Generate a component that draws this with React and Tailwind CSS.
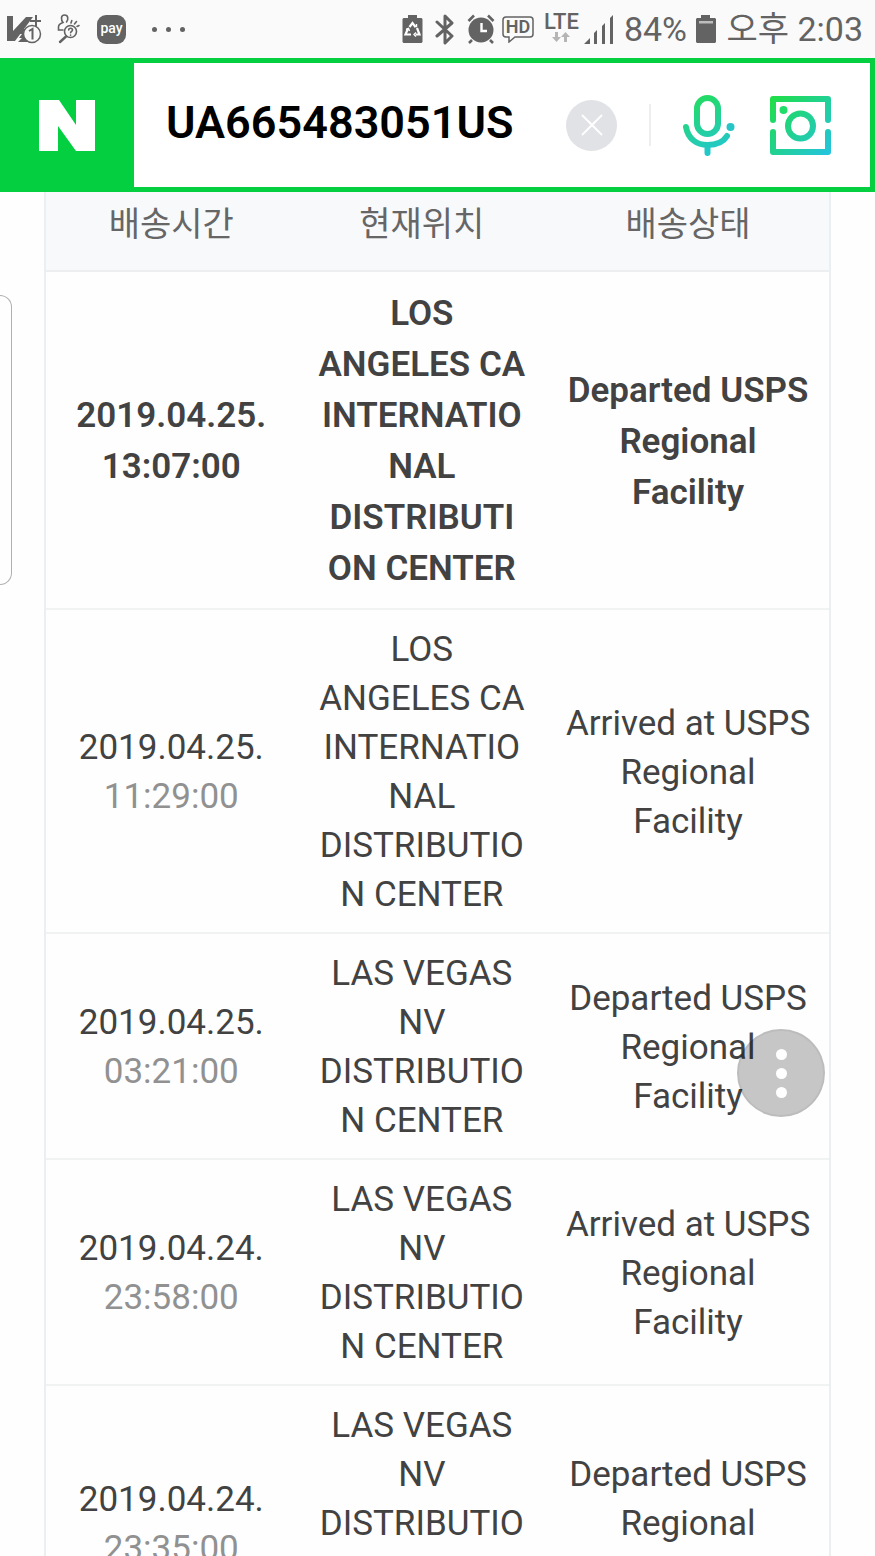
import { useState } from 'react';

const shipments = [
  {
    date: '2019.04.25.',
    time: '13:07:00',
    location: ['LOS', 'ANGELES CA', 'INTERNATIO', 'NAL', 'DISTRIBUTI', 'ON CENTER'],
    status: ['Departed USPS', 'Regional', 'Facility'],
    latest: true,
  },
  {
    date: '2019.04.25.',
    time: '11:29:00',
    location: ['LOS', 'ANGELES CA', 'INTERNATIO', 'NAL', 'DISTRIBUTIO', 'N CENTER'],
    status: ['Arrived at USPS', 'Regional', 'Facility'],
  },
  {
    date: '2019.04.25.',
    time: '03:21:00',
    location: ['LAS VEGAS', 'NV', 'DISTRIBUTIO', 'N CENTER'],
    status: ['Departed USPS', 'Regional', 'Facility'],
  },
  {
    date: '2019.04.24.',
    time: '23:58:00',
    location: ['LAS VEGAS', 'NV', 'DISTRIBUTIO', 'N CENTER'],
    status: ['Arrived at USPS', 'Regional', 'Facility'],
  },
  {
    date: '2019.04.24.',
    time: '23:35:00',
    location: ['LAS VEGAS', 'NV', 'DISTRIBUTIO', 'N CENTER', '\u00a0'],
    status: ['Departed USPS', 'Regional', 'Facility'],
  },
];

const VaccineIcon = () => (
  <svg width="36" height="30" viewBox="0 0 36 30">
    <path d="M0 2h6v15L19 3h7L8 27H0z" fill="#636363" />
    <path d="M14 15h8v13H11l4-4h-3l3-4h-3z" fill="#636363" />
    <path d="M29 1v12M23 7h11" stroke="#636363" strokeWidth="2" />
    <circle cx="25" cy="20" r="8.5" fill="#fafafa" stroke="#636363" strokeWidth="1.5" />
    <path d="M22 17l3.500-2v10.500" fill="none" stroke="#636363" strokeWidth="2" />
  </svg>
);

const FindUserIcon = () => (
  <svg width="24" height="30" viewBox="0 0 24 30" fill="none" stroke="#636363" strokeWidth="1.600" strokeLinecap="round">
    <path d="M6 16H1.500v-3c0-3 2-3.500 4.500-4.500C4 6 3.500 1 7.500 1S11.500 5.500 9.500 8" />
    <circle cx="13.500" cy="17.500" r="6" />
    <path d="M9 22.500L3 28" strokeWidth="2.400" />
    <path d="M11.700 16c0-2.500 3.800-2.300 3.800 0 0 1.300-1.900 1.300-1.900 2.800M13.600 21v.2" />
    <path d="M14 9l.8-2.500M17.500 10l2-2.500M20 12.500l2-1" />
  </svg>
);

const RecycleBatteryIcon = () => (
  <svg width="21" height="30" viewBox="0 0 21 30">
    <path d="M6 1h9v3h4.500l1 1v23l-1 1h-18l-1-1V5l1-1H6z" fill="#636363" />
    <g fill="none" stroke="#fff" strokeWidth="2.200">
      <path d="M7.500 13l3-4 3 4M15 14l2.500 6.500h-4M9 20.500H3.500L6 14.500" />
      <path d="M12 12.500h2.500V10M14 18.500l-2 2 2 2M4 15.500l2.500-1 1 2.500" strokeWidth="1.400" />
    </g>
  </svg>
);

const BluetoothIcon = () => (
  <svg width="20" height="31" viewBox="0 0 20 31">
    <path d="M2 8l15 14-7 7V2l7 7L2 22" fill="none" stroke="#636363" strokeWidth="3" strokeLinejoin="round" strokeLinecap="round" />
  </svg>
);

const AlarmIcon = () => (
  <svg width="28" height="30" viewBox="0 0 28 30">
    <circle cx="14" cy="16" r="12.500" fill="#636363" />
    <path d="M1.500 7L7 1.500M26.500 7L21 1.500M5 26l-3 3M23 26l3 3" stroke="#636363" strokeWidth="2.600" />
    <path d="M14.500 9v8H20" fill="none" stroke="#fff" strokeWidth="2.400" />
  </svg>
);

const HdIcon = () => (
  <svg width="32" height="27" viewBox="0 0 32 27">
    <path
      d="M4 1h24q3 0 3 3v14q0 3-3 3H13l-6 5v-5H4q-3 0-3-3V4q0-3 3-3z"
      fill="none"
      stroke="#636363"
      strokeWidth="1.500"
    />
    <text x="16" y="17" textAnchor="middle" fontFamily="Roboto, sans-serif" fontWeight="600" fontSize="18" fill="#636363">
      HD
    </text>
  </svg>
);

const SignalIcon = () => (
  <svg width="30" height="29" viewBox="0 0 30 29" fill="#636363">
    <path d="M0 29l6-6v6zM10 18l3-3v14h-3zM18 11l3-3v21h-3zM26 3l3-3v29h-3z" />
  </svg>
);

const BatteryIcon = () => (
  <svg width="20" height="30" viewBox="0 0 20 30">
    <path d="M5 1h9v3h5l1 1v23l-1 1H1l-1-1V5l1-1h4z" fill="#636363" />
    <path d="M3 7h14v2.500H3z" fill="#bdbdbd" />
  </svg>
);

const MicIcon = () => (
  <svg width="52" height="63" viewBox="0 0 52 63" fill="none" strokeWidth="6" strokeLinecap="round">
    <defs>
      <linearGradient id="mic" x1="10" y1="0" x2="36" y2="63" gradientUnits="userSpaceOnUse">
        <stop offset="0" stopColor="#23dd5a" />
        <stop offset="1" stopColor="#23c5d8" />
      </linearGradient>
    </defs>
    <rect x="14" y="4" width="21" height="36" rx="10.500" stroke="url(#mic)" />
    <path d="M3 33c2 12 11 18 21.500 18S41 47 44 42M24.500 51v8" stroke="url(#mic)" />
    <circle cx="47.500" cy="33" r="4" fill="#27c4c8" />
  </svg>
);

const CameraIcon = () => (
  <svg width="61" height="59" viewBox="0 0 61 59" fill="none" strokeWidth="6" strokeLinecap="round" strokeLinejoin="round">
    <defs>
      <linearGradient id="cam" x1="0" y1="0" x2="61" y2="59" gradientUnits="userSpaceOnUse">
        <stop offset="0" stopColor="#1fdf43" />
        <stop offset="1" stopColor="#24c3e2" />
      </linearGradient>
    </defs>
    <path d="M3 24V3h55v21M3 36v20h55V36" stroke="url(#cam)" />
    <circle cx="30.500" cy="30" r="12.500" stroke="url(#cam)" />
    <circle cx="13.500" cy="14" r="4" fill="#22dc68" />
  </svg>
);

const StatusBar = () => (
  <div className="flex h-[58px] shrink-0 items-center justify-between bg-[#fafafa] pl-[7px] pr-3 text-[#636363]">
    <div className="flex items-center">
      <VaccineIcon />
      <div className="ml-[14px]">
        <FindUserIcon />
      </div>
      <span className="ml-4 flex h-[29px] w-[29px] items-center justify-center rounded-[9px] bg-[#636363] pb-[2px] text-[14px] font-medium text-white">
        pay
      </span>
      <div className="ml-[26px] flex gap-[9px]">
        <i className="h-[5px] w-[5px] rounded-full bg-[#636363]" />
        <i className="h-[5px] w-[5px] rounded-full bg-[#636363]" />
        <i className="h-[5px] w-[5px] rounded-full bg-[#636363]" />
      </div>
    </div>
    <div className="flex items-center">
      <RecycleBatteryIcon />
      <div className="ml-3">
        <BluetoothIcon />
      </div>
      <div className="ml-3">
        <AlarmIcon />
      </div>
      <div className="ml-[7px]">
        <HdIcon />
      </div>
      <div className="ml-2 flex w-[38px] flex-col items-center pb-1">
        <span className="text-[22px] font-medium leading-5">LTE</span>
        <svg width="18" height="10" viewBox="0 0 18 10" fill="#b5b5b5">
          <path d="M3 0h3v5h3L4.500 10 0 5h3zM12 10h3V5h3L13.500 0 9 5h3z" />
        </svg>
      </div>
      <div className="ml-1">
        <SignalIcon />
      </div>
      <span className="ml-2 w-[66px] text-center text-[34px]">84%</span>
      <div className="ml-2">
        <BatteryIcon />
      </div>
      <span className="ml-[10px] whitespace-nowrap text-[34px]">오후 2:03</span>
    </div>
  </div>
);

const SearchBar = () => {
  const [query, setQuery] = useState('UA665483051US');

  return (
    <header className="relative z-10 flex h-[134px] shrink-0 bg-[#03cf40]">
      <a href="#home" aria-label="NAVER" className="flex w-[134px] shrink-0 items-center justify-center">
        <svg width="56" height="51" viewBox="0 0 56 51" fill="#fff">
          <path d="M0 0h20l17 25V0h19v51H37L19 26v25H0z" />
        </svg>
      </a>
      <form
        onSubmit={(e) => e.preventDefault()}
        className="my-[5px] mr-[5px] flex min-w-0 flex-1 items-center bg-white pl-8 pr-[39px]"
      >
        <input
          type="text"
          aria-label="검색어"
          value={query}
          onChange={(e) => setQuery(e.target.value)}
          className="min-w-0 flex-1 bg-transparent pb-1 text-[45px] font-semibold text-black outline-none"
        />
        <button
          type="button"
          aria-label="지우기"
          onClick={() => setQuery('')}
          className="flex h-[51px] w-[51px] shrink-0 items-center justify-center rounded-full bg-[#e1e2e6]"
        >
          <svg width="22" height="22" viewBox="0 0 22 22" stroke="#fff" strokeWidth="2">
            <path d="M1 1l20 20M21 1L1 21" />
          </svg>
        </button>
        <div className="ml-8 h-[42px] w-[2px] shrink-0 bg-[#eeeeee]" />
        <button type="button" aria-label="음성 검색" className="ml-8 shrink-0">
          <MicIcon />
        </button>
        <button type="button" aria-label="렌즈 검색" className="ml-[35px] shrink-0">
          <CameraIcon />
        </button>
      </form>
    </header>
  );
};

const Lines = ({ lines }) => lines.map((line, i) => <div key={i}>{line}</div>);

const TrackingTable = () => (
  <table className="w-full table-fixed border-separate border-spacing-0 border-x-2 border-[#eceff1] text-center text-[#424242]">
    <thead className="bg-[#f8f9fb] text-[34px] leading-[51px] text-[#666666]">
      <tr>
        <th className="w-[32%] border-b-2 border-[#eceeef] pb-5 pt-[7px] font-normal">배송시간</th>
        <th className="w-[32%] border-b-2 border-[#eceeef] pb-5 pt-[7px] font-normal">현재위치</th>
        <th className="w-[36%] border-b-2 border-[#eceeef] pb-5 pt-[7px] font-normal">배송상태</th>
      </tr>
    </thead>
    <tbody>
      {shipments.map((item) => {
        const cell = item.latest
          ? 'border-b-2 border-[#f1f3f3] pb-[14px] pt-4'
          : 'border-b-2 border-[#f1f3f3] pb-[13px] pt-[15px]';
        return (
          <tr
            key={item.date + item.time}
            className={item.latest ? 'text-[35px] font-semibold leading-[51px]' : 'text-[35px] leading-[49px]'}
          >
            <td className={cell}>
              <div>{item.date}</div>
              <div className={item.latest ? '' : 'text-[#919191]'}>{item.time}</div>
            </td>
            <td className={cell}>
              <Lines lines={item.location} />
            </td>
            <td className={cell}>
              <Lines lines={item.status} />
            </td>
          </tr>
        );
      })}
    </tbody>
  </table>
);

const App = () => {
  return (
    <div className="relative flex h-screen flex-col overflow-hidden bg-[#fefefe] font-['Roboto','Noto_Sans_CJK_KR',sans-serif]">
      <StatusBar />
      <SearchBar />
      <main className="min-h-0 flex-1 overflow-hidden px-11">
        <TrackingTable />
      </main>

      {/* Edge panel handle */}
      <div className="absolute left-0 top-[295px] h-[290px] w-3 rounded-r-xl border border-l-0 border-[#b0b0b0]" />

      {/* Floating menu */}
      <button
        type="button"
        aria-label="메뉴"
        className="absolute bottom-[439px] right-[50px] flex h-[88px] w-[88px] flex-col items-center justify-center gap-2 rounded-full border-2 border-black/5 bg-black/22"
      >
        <i className="h-[11px] w-[11px] rounded-full bg-white" />
        <i className="h-[11px] w-[11px] rounded-full bg-white" />
        <i className="h-[11px] w-[11px] rounded-full bg-white" />
      </button>
    </div>
  );
};

export default App;
